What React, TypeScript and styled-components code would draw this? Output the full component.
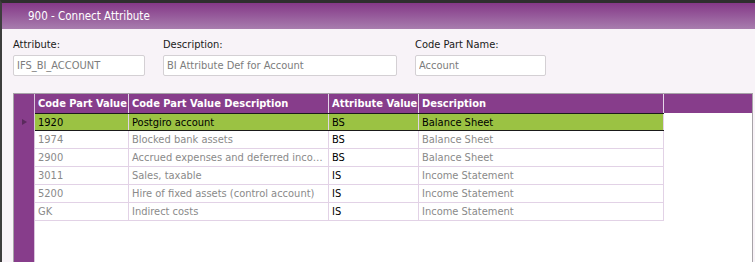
import styled, { createGlobalStyle } from "styled-components";

interface Row {
  code: string;
  desc: string;
  attr: string;
  attrDesc: string;
}

const ROWS: Row[] = [
  { code: "1920", desc: "Postgiro account", attr: "BS", attrDesc: "Balance Sheet" },
  { code: "1974", desc: "Blocked bank assets", attr: "BS", attrDesc: "Balance Sheet" },
  { code: "2900", desc: "Accrued expenses and deferred income", attr: "BS", attrDesc: "Balance Sheet" },
  { code: "3011", desc: "Sales, taxable", attr: "IS", attrDesc: "Income Statement" },
  { code: "5200", desc: "Hire of fixed assets (control account)", attr: "IS", attrDesc: "Income Statement" },
  { code: "GK", desc: "Indirect costs", attr: "IS", attrDesc: "Income Statement" },
];

const COLUMNS = "94px 200px 90px 245px";

const App = () => {
  return (
    <>
      <GlobalStyle />
      <Window>
        <TitleBar>900 - Connect Attribute</TitleBar>

        <Form>
          <Field $width={132}>
            <Label>Attribute:</Label>
            <Input readOnly value="IFS_BI_ACCOUNT" />
          </Field>
          <Field $width={234}>
            <Label>Description:</Label>
            <Input readOnly value="BI Attribute Def for Account" />
          </Field>
          <Field $width={131}>
            <Label>Code Part Name:</Label>
            <Input readOnly value="Account" />
          </Field>
        </Form>

        <Grid>
          <RowHeaders>
            <RowHeaderCell $header />
            {ROWS.map((r, i) => (
              <RowHeaderCell key={r.code}>{i === 0 && <Marker />}</RowHeaderCell>
            ))}
          </RowHeaders>

          <GridBody>
            <HeaderBar>
              <HeaderCells>
                <HeaderCell>Code Part Value</HeaderCell>
                <HeaderCell>Code Part Value Description</HeaderCell>
                <HeaderCell>Attribute Value</HeaderCell>
                <HeaderCell>Description</HeaderCell>
              </HeaderCells>
            </HeaderBar>

            {ROWS.map((r, i) => (
              <DataRow key={r.code} $selected={i === 0}>
                <Cell>{r.code}</Cell>
                <Cell>{r.desc}</Cell>
                <Cell $dark>{r.attr}</Cell>
                <Cell>{r.attrDesc}</Cell>
              </DataRow>
            ))}
          </GridBody>
        </Grid>
      </Window>
    </>
  );
};

export default App;

// ── Styles ──────────────────────────────────────────────────────────

const GlobalStyle = createGlobalStyle`
  html, body {
    margin: 0;
    padding: 0;
    background: #f8f3f8;
  }
  body {
    font-family: "DejaVu Sans Condensed", "Liberation Sans", Arial, sans-serif;
    font-size: 11px;
  }
`;

const Window = styled.div`
  width: 755px;
  height: 262px;
  box-sizing: border-box;
  border-top: 3px solid #2e2e2e;
  border-left: 2px solid #3d3d3d;
  background: #f8f3f8;
  display: flex;
  flex-direction: column;
  overflow: hidden;
`;

const TitleBar = styled.div`
  height: 26px;
  flex: none;
  display: flex;
  align-items: center;
  padding-left: 26px;
  padding-bottom: 1px;
  box-sizing: border-box;
  color: #ffffff;
  font-size: 11.5px;
  background: linear-gradient(#843887, #a87dae);
`;

const Form = styled.div`
  display: flex;
  gap: 18px;
  padding: 9px 0 0 11px;
`;

const Field = styled.div<{ $width: number }>`
  width: ${(p) => p.$width}px;
  display: flex;
  flex-direction: column;
  gap: 3px;
`;

const Label = styled.span`
  color: #1a1a1a;
  line-height: 14px;
`;

const Input = styled.input`
  height: 21px;
  box-sizing: border-box;
  border: 1px solid #d4d0d4;
  border-radius: 2px;
  background: #ffffff;
  color: #7c7c7c;
  font-family: inherit;
  font-size: 11px;
  padding: 0 3px;
  outline: none;
`;

const Grid = styled.div`
  flex: 1;
  margin: 17px 2px 0 11px;
  display: flex;
  border: 1px solid #a7a3a8;
  border-bottom: none;
  background: #ffffff;
  min-height: 0;
`;

const RowHeaders = styled.div`
  width: 20px;
  flex: none;
  background: #873d8b;
  border-right: 1px solid #d9c4dc;
`;

const RowHeaderCell = styled.div<{ $header?: boolean }>`
  height: ${(p) => (p.$header ? 19 : 18)}px;
  display: flex;
  align-items: center;
  justify-content: center;
`;

const Marker = styled.span`
  width: 0;
  height: 0;
  border-top: 3px solid transparent;
  border-bottom: 3px solid transparent;
  border-left: 5px solid #5a2a5d;
  margin-left: 1px;
`;

const GridBody = styled.div`
  flex: 1;
  display: flex;
  flex-direction: column;
`;

const HeaderBar = styled.div`
  height: 19px;
  background: #873d8b;
`;

const HeaderCells = styled.div`
  display: grid;
  grid-template-columns: ${COLUMNS};
  height: 100%;
`;

const HeaderCell = styled.div`
  color: #ffffff;
  font-weight: bold;
  line-height: 19px;
  padding-left: 3px;
  border-right: 1px solid #e6d6e8;
  white-space: nowrap;
  overflow: hidden;
`;

const DataRow = styled.div<{ $selected?: boolean }>`
  display: grid;
  grid-template-columns: ${COLUMNS};
  width: 629px;
  height: 18px;
  box-sizing: border-box;
  border-bottom: 1px solid ${(p) => (p.$selected ? "#1a1a1a" : "#e2d2e6")};
  border-top: ${(p) => (p.$selected ? "1px solid #1a1a1a" : "none")};
  background: ${(p) => (p.$selected ? "#9bc243" : "#ffffff")};
  color: ${(p) => (p.$selected ? "#000000" : "#8a8a8a")};
`;

const Cell = styled.div<{ $dark?: boolean }>`
  padding-left: 3px;
  line-height: 17px;
  border-right: 1px solid #e2d2e6;
  white-space: nowrap;
  overflow: hidden;
  text-overflow: ellipsis;
  ${(p) => (p.$dark ? "color: #000000;" : "")}
`;
